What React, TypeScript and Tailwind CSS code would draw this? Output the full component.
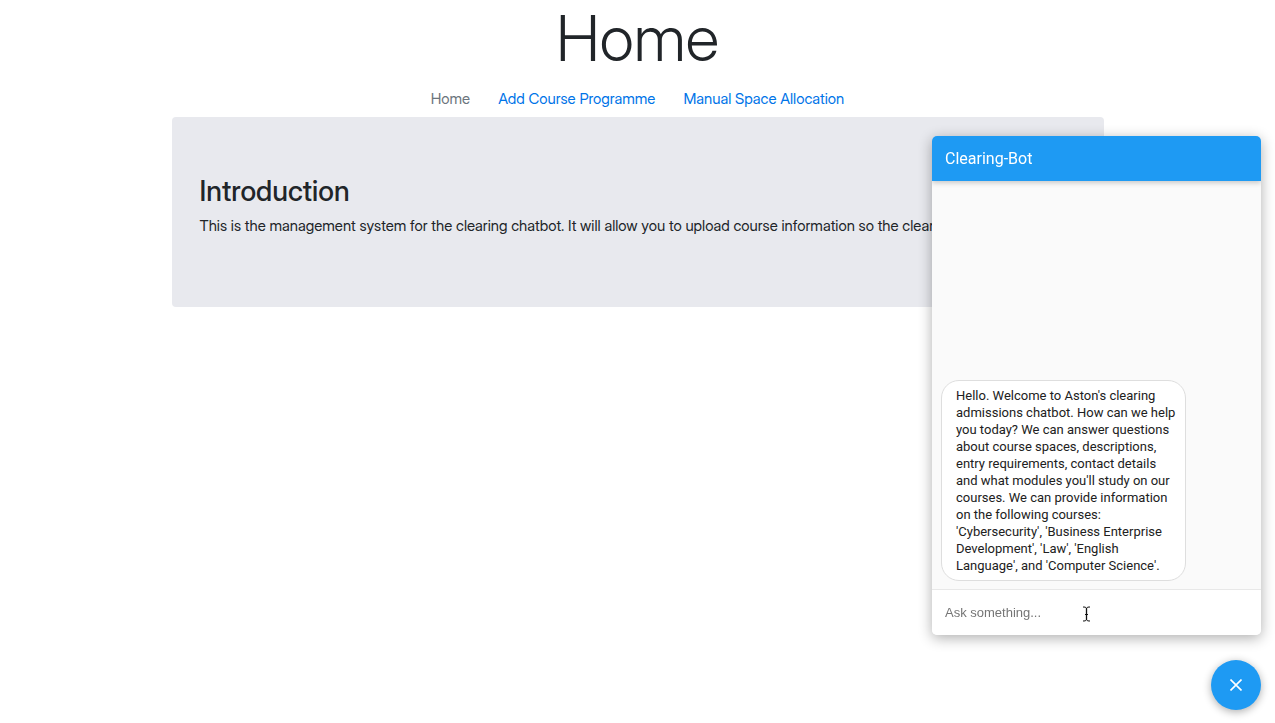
import { useState } from "react";

const greeting =
  "Hello. Welcome to Aston's clearing admissions chatbot. How can we help you today? We can answer questions about course spaces, descriptions, entry requirements, contact details and what modules you'll study on our courses. We can provide information on the following courses: 'Cybersecurity', 'Business Enterprise Development', 'Law', 'English Language', and 'Computer Science'.";

const links = [
  { label: "Add Course Programme", href: "#add-course" },
  { label: "Manual Space Allocation", href: "#space-allocation" },
];

function Navigation() {
  return (
    <nav className="flex justify-center gap-7 py-2 text-[15px] leading-5">
      <a href="#home" aria-current="page" className="text-[#6c757d]">
        Home
      </a>
      {links.map((link) => (
        <a key={link.href} href={link.href} className="text-[#0074e8]">
          {link.label}
        </a>
      ))}
    </nav>
  );
}

function TextCursor() {
  return (
    <svg
      aria-hidden="true"
      viewBox="0 0 9 16"
      className="pointer-events-none absolute left-[150px] top-4 h-4 w-[9px]"
      fill="none"
      stroke="#111"
      strokeWidth="1"
    >
      <path d="M1 1Q4 .5 4.500 2.500Q5 .5 8 1M1 15Q4 15.500 4.500 13.500Q5 15.500 8 15M3 8.500h3" />
      <path d="M4.500 2v12" strokeWidth="1.300" />
    </svg>
  );
}

function ChatWindow() {
  return (
    <section
      aria-label="Clearing-Bot"
      className="flex h-[499px] w-[329px] flex-col overflow-hidden rounded-[5px] bg-[#fafafa] font-['Roboto',sans-serif] shadow-[0_3px_14px_rgba(0,0,0,0.32)]"
    >
      <header className="z-10 flex h-[45px] shrink-0 items-center bg-[#1e9af3] px-[13px] text-base text-white shadow-[0_2px_5px_rgba(0,0,0,0.2)]">
        <h2>Clearing-Bot</h2>
      </header>
      <div className="flex flex-1 flex-col items-start justify-end px-[9px] pb-2">
        <p className="w-[245px] rounded-[18px] border border-[#dedede] bg-white py-[6px] pr-2 pl-[14px] text-[13px] leading-[17px] text-[#212121]">
          {greeting}
        </p>
      </div>
      <form
        className="relative h-[46px] shrink-0 border-t border-[#e8e8e8] bg-white"
        onSubmit={(event) => event.preventDefault()}
      >
        <input
          type="text"
          aria-label="Message"
          placeholder="Ask something..."
          className="h-full w-full bg-transparent px-[13px] font-['Liberation_Sans',sans-serif] text-[13px] text-[#212121] outline-none placeholder:text-[#757575]"
        />
        <TextCursor />
      </form>
    </section>
  );
}

export default function App() {
  const [open, setOpen] = useState(true);

  return (
    <div className="min-h-screen bg-white font-['Inter_Display','Inter',sans-serif] text-[#212529]">
      <main className="mx-auto max-w-[932px]">
        <h1 className="pb-[5px] text-center text-[63px] font-light leading-[76px]">Home</h1>
        <Navigation />
        <section className="rounded-[4px] bg-[#e8e9ee] px-7 pt-[57px] pb-[71px]">
          <h2 className="mb-2 text-[28px] font-medium leading-[34px]">Introduction</h2>
          <p className="text-[15px] leading-5">
            This is the management system for the clearing chatbot. It will allow you to upload
            course information so the clearing
          </p>
        </section>
      </main>

      <div className="fixed right-[14px] bottom-[13px] flex flex-col items-end gap-[25px]">
        {open && <ChatWindow />}
        <button
          type="button"
          aria-label={open ? "Close chat" : "Open chat"}
          onClick={() => setOpen(!open)}
          className="flex size-[50px] items-center justify-center rounded-full bg-[#1e9af3] text-white shadow-[0_2px_8px_rgba(0,0,0,0.32)]"
        >
          <svg
            aria-hidden="true"
            viewBox="0 0 12 12"
            className="size-3"
            fill="none"
            stroke="currentColor"
            strokeWidth="1.6"
          >
            <path d="M.5.5l11 11M11.500.5l-11 11" />
          </svg>
        </button>
      </div>
    </div>
  );
}
